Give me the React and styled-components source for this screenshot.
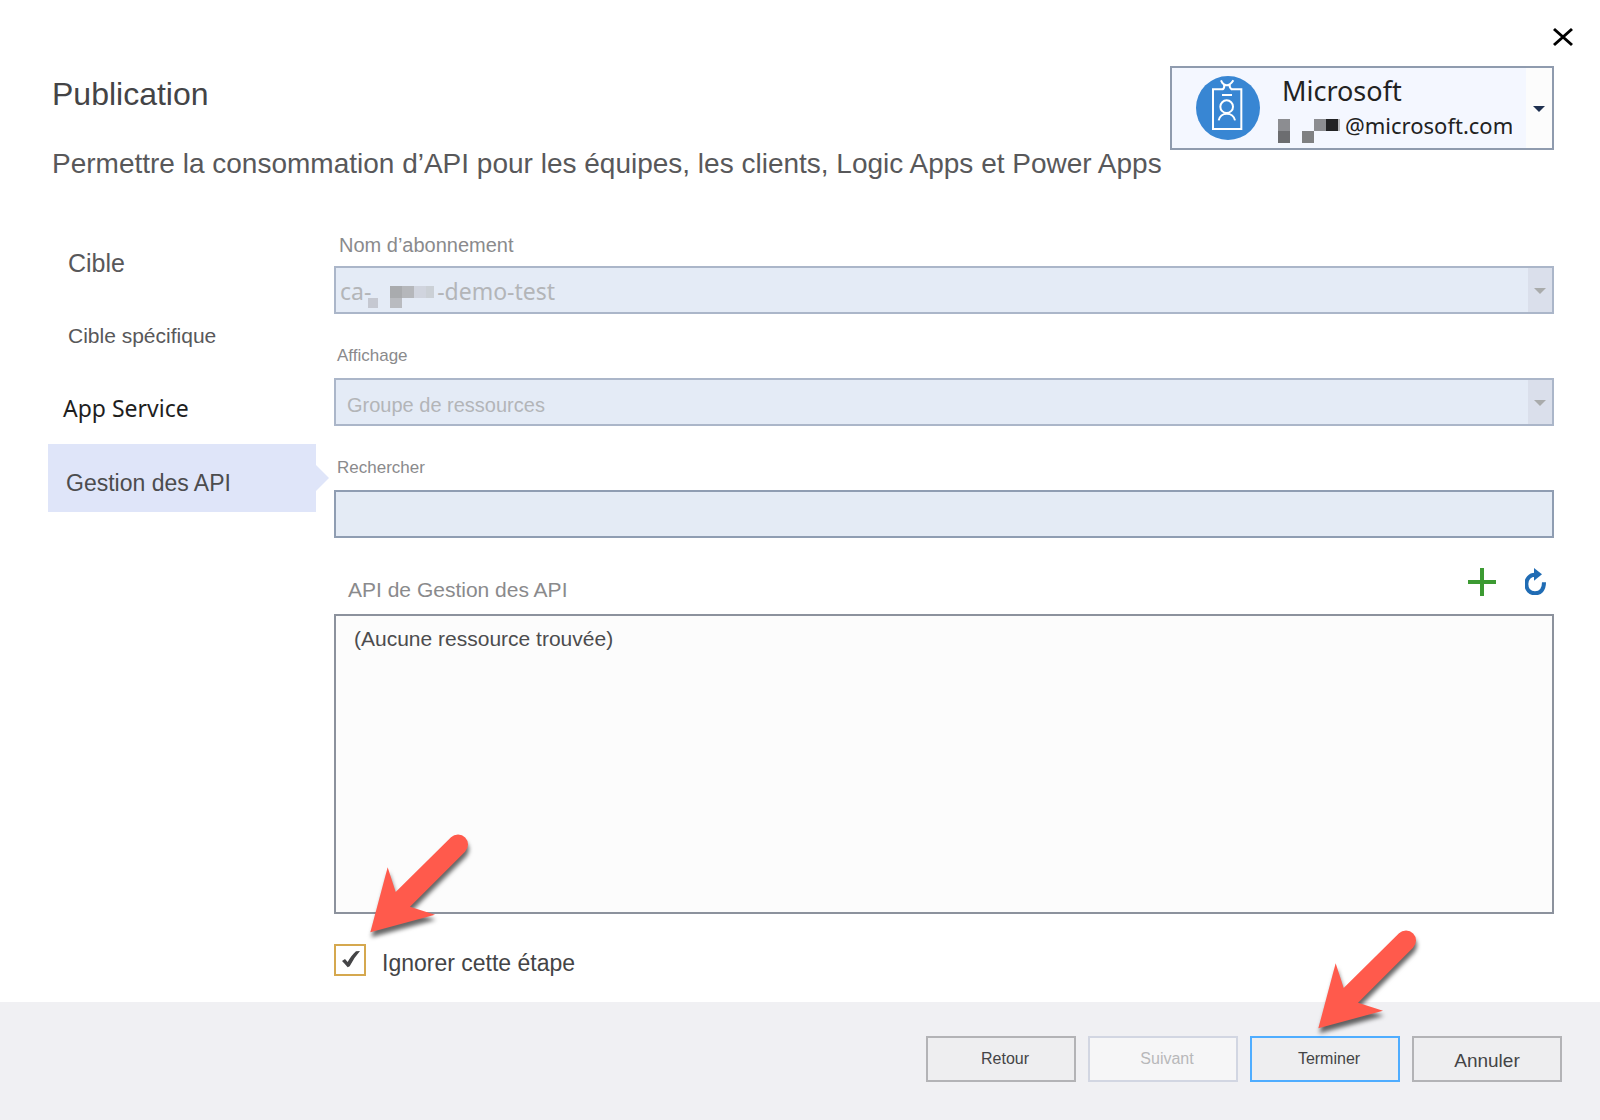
import React from "react"
import styled, { createGlobalStyle, css } from "styled-components"

const GlobalStyle = createGlobalStyle`
  *,
  *::before,
  *::after {
    box-sizing: border-box;
  }

  body {
    margin: 0;
    background: #fff;
    font-family: "Liberation Sans", Arial, sans-serif;
    color: #4c4c4e;
  }

  button,
  input,
  select {
    font-family: inherit;
    margin: 0;
  }
`

const segoe = css`
  font-family: "Noto Sans", "Open Sans", sans-serif;
`

const Dialog = styled.div`
  min-height: 100vh;
  display: flex;
  flex-direction: column;
`

const TitleBar = styled.div`
  height: 66px;
  padding: 26px 25px 0 0;
  display: flex;
  justify-content: flex-end;
  align-items: flex-start;
`

const CloseButton = styled.button`
  border: 0;
  padding: 0;
  background: transparent;
  cursor: pointer;

  svg {
    display: block;
  }
`

const Header = styled.header`
  display: flex;
  align-items: flex-start;
  padding: 0 46px 46px 52px;
`

const Titles = styled.div`
  flex: 1;
  min-width: 0;
  padding-top: 6px;
`

const Title = styled.h1`
  margin: 0 0 30px;
  font-size: 32px;
  font-weight: 400;
  line-height: 44px;
  color: #444446;
`

const Subtitle = styled.p`
  margin: 0;
  font-size: 28px;
  line-height: 36px;
  white-space: nowrap;
  color: #58585a;
`

const AccountButton = styled.button`
  flex: 0 0 384px;
  height: 84px;
  padding: 0;
  display: flex;
  align-items: stretch;
  border: 2px solid #8f9bae;
  background: #f4f7ff;
  color: #222;
  text-align: left;
  cursor: pointer;
`

const AccountInfo = styled.span`
  flex: 1;
  display: flex;
  align-items: center;
  gap: 18px;
  padding-left: 24px;
`

const AccountText = styled.span`
  ${segoe}
  display: block;
  line-height: 35px;
`

const AccountName = styled.span`
  display: block;
  padding-left: 4px;
  font-size: 27px;
`

const AccountMail = styled.span`
  display: flex;
  align-items: center;
  gap: 5px;
  font-size: 22px;

  svg {
    margin-top: 10px;
  }
`

const MailDomain = styled.span`
  width: 167px;
  overflow: hidden;
  white-space: nowrap;
`

const Chevron = styled.span`
  display: flex;
  align-items: center;
  justify-content: center;
  width: ${props => (props.$disabled ? 24 : 26)}px;
  padding-top: 2px;
  background: ${props => (props.$disabled ? "#dadfeb" : "#fcfcfc")};

  &::after {
    content: "";
    border: 6px solid transparent;
    border-top-color: ${props => (props.$disabled ? "#a9abab" : "#1f3050")};
    border-bottom: 0;
  }
`

const Body = styled.div`
  flex: 1;
  display: grid;
  grid-template-columns: 268px 1fr;
  gap: 18px;
  padding: 0 46px 26px 48px;
`

const Steps = styled.nav`
  display: flex;
  flex-direction: column;
  gap: 4px;
`

const Step = styled.a`
  position: relative;
  display: flex;
  align-items: center;
  height: 68px;
  padding: 3px 0 0 20px;
  font-size: ${props => props.$size}px;
  color: #58585a;
  text-decoration: none;

  ${props =>
    props.$latin &&
    css`
      ${segoe}
      padding-left: 15px;
      color: #1e1e1e;
    `}

  ${props =>
    props.$active &&
    css`
      padding: 10px 0 0 18px;
      background: #dfe5f9;
      color: #4c4c4e;

      &::after {
        content: "";
        position: absolute;
        left: 100%;
        top: 21px;
        border: 13px solid transparent;
        border-left-color: #dfe5f9;
        border-right: 0;
      }
    `}
`

const Form = styled.form`
  display: flex;
  flex-direction: column;
`

const Field = styled.div`
  margin-bottom: 26px;
`

const Label = styled.label`
  display: block;
  height: 38px;
  padding-left: ${props => (props.$small ? 3 : 5)}px;
  font-size: ${props => (props.$small ? 17 : 20)}px;
  line-height: ${props => (props.$small ? 31 : 34)}px;
  color: #8a8a8c;
`

const SelectBox = styled.div`
  position: relative;
  display: flex;
  height: 48px;
  border: 2px solid #abb6c9;
  background: #e4ebf6;
`

const Select = styled.select`
  flex: 1;
  min-width: 0;
  appearance: none;
  border: 0;
  padding: ${props => (props.$latin ? "2px 0 0 4px" : "6px 0 0 11px")};
  background: transparent;
  font-size: 20px;
  color: #b3b5b8;
  opacity: 1;

  ${props =>
    props.$latin &&
    css`
      ${segoe}
      font-size: 23px;
    `}
`

/* covers the hidden part of the subscription name */
const NameMask = styled.svg`
  position: absolute;
  left: 32px;
  top: 18px;
`

const SearchInput = styled.input`
  display: block;
  width: 100%;
  height: 48px;
  padding: 0 10px;
  border: 2px solid #8f9db2;
  border-radius: 0;
  background: #e4ebf5;
  font-size: 20px;
`

const ListHeader = styled.div`
  display: flex;
  justify-content: space-between;
  height: 50px;
  padding: 0 8px 0 14px;
`

const ListTitle = styled.h2`
  margin: 0;
  font-size: 21px;
  font-weight: 400;
  line-height: 52px;
  color: #8a8a8c;
`

const ListActions = styled.div`
  display: flex;
  align-items: flex-start;
  gap: 29px;
  padding-top: 4px;
`

const IconButton = styled(CloseButton)``

const ResourceList = styled.div`
  flex: 1;
  min-height: 200px;
  padding: 6px 18px;
  border: 2px solid #8c929d;
  background: #fcfcfc;
  font-size: 21px;
  line-height: 34px;
  color: #4c4c4e;
`

const SkipRow = styled.div`
  position: relative;
  display: flex;
  align-items: center;
  gap: 16px;
  margin-top: 30px;
`

const CheckBox = styled.input`
  appearance: none;
  width: 32px;
  height: 32px;
  margin: 0;
  border: 2px solid #d5a84f;
  background: #fff;
`

const CheckMark = styled.svg`
  position: absolute;
  left: 8px;
  top: 7px;
  pointer-events: none;
`

const SkipLabel = styled.label`
  padding-top: 6px;
  font-size: 23px;
  line-height: 26px;
  color: #444446;
`

const Footer = styled.footer`
  display: flex;
  justify-content: flex-end;
  gap: 12px;
  padding: 34px 38px 38px;
  background: #f0f0f3;
`

const ButtonSlot = styled.div`
  position: relative;
`

const borders = {
  normal: "#b3b3b6",
  disabled: "#d2d6e2",
  primary: "#4fadff",
}

const Button = styled.button`
  display: block;
  width: 150px;
  height: 46px;
  padding: ${props => (props.$large ? "4px 0 0" : "0 0 0 8px")};
  border: 2px solid ${props => borders[props.$kind || "normal"]};
  background: ${props => (props.disabled ? "#f6f6f7" : "#eeeef0")};
  font-size: ${props => (props.$large ? 19 : 16)}px;
  color: ${props => (props.disabled ? "#b8b8ba" : "#444446")};
`

const Pointer = styled.svg`
  position: absolute;
  left: ${props => props.$left}px;
  top: ${props => props.$top}px;
  z-index: 1;
  overflow: visible;
  pointer-events: none;
  filter: drop-shadow(1px 5px 2px rgba(0, 0, 0, 0.6));
`

const Arrow = ({ left, top }) => (
  <Pointer $left={left} $top={top} width="110" height="110" viewBox="0 0 330 330" aria-hidden="true">
    <path
      d="M10 304 L62 109 L86 183 L252 19 A30 30 0 0 1 294 62 L129 227 L204 251 Z"
      fill="#ff5a4c"
    />
  </Pointer>
)

const BadgeIcon = () => (
  <svg width="64" height="64" viewBox="0 0 192 192" fill="none" aria-hidden="true">
    <circle cx="96" cy="96" r="96" fill="#3886d3" />
    <g stroke="#fff" strokeWidth="6">
      <path d="M81 40 H51 V159 H136 V40 H107" />
      <path d="M75 13 Q79 23 84 25 Q93 31 101 25 Q107 22 112 13" />
      <path d="M84 25 Q87 34 80 41 M101 25 Q99 34 108 41" />
      <path d="M78 57 H108" />
      <circle cx="92" cy="92" r="19" />
      <path d="M68 133 A25 25 0 0 1 117 133" />
    </g>
  </svg>
)

const MailMask = () => (
  <svg width="62" height="24" viewBox="0 0 62 24" aria-hidden="true">
    <path d="M0 0h12v12H0z M36 0h12v12H36z" fill="#8c8d91" />
    <path d="M0 12h12v12H0z" fill="#6c6d70" />
    <path d="M24 12h12v12H24z" fill="#7f8082" />
    <path d="M48 0h12v12H48z" fill="#222224" />
    <path d="M60 0h2v12h-2z" fill="#b5b6ba" />
  </svg>
)

const App = () => {
  const [skip, setSkip] = React.useState(true)

  return (
    <Dialog>
      <GlobalStyle />
      <TitleBar>
        <CloseButton type="button" aria-label="Fermer">
          <svg width="24" height="22" viewBox="0 0 24 22">
            <path d="M3 3 L21 19 M21 3 L3 19" stroke="#000" strokeWidth="3" />
          </svg>
        </CloseButton>
      </TitleBar>

      <Header>
        <Titles>
          <Title>Publication</Title>
          <Subtitle>
            Permettre la consommation d’API pour les équipes, les clients, Logic Apps et Power Apps
          </Subtitle>
        </Titles>
        <AccountButton type="button" aria-haspopup="listbox">
          <AccountInfo>
            <BadgeIcon />
            <AccountText>
              <AccountName>Microsoft</AccountName>
              <AccountMail>
                <MailMask />
                <MailDomain>@microsoft.com</MailDomain>
              </AccountMail>
            </AccountText>
          </AccountInfo>
          <Chevron />
        </AccountButton>
      </Header>

      <Body>
        <Steps>
          <Step href="#cible" $size={25}>Cible</Step>
          <Step href="#cible-specifique" $size={21}>Cible spécifique</Step>
          <Step href="#app-service" $size={23} $latin>App Service</Step>
          <Step href="#gestion-api" $size={23} $active aria-current="step">Gestion des API</Step>
        </Steps>

        <Form>
          <Field>
            <Label htmlFor="subscription">Nom d’abonnement</Label>
            <SelectBox>
              <Select id="subscription" $latin disabled>
                <option>{"ca-" + "\u00a0".repeat(11) + "-demo-test"}</option>
              </Select>
              <Chevron $disabled />
              <NameMask width="66" height="22" viewBox="0 0 66 22" aria-hidden="true">
                <path d="M0 12h10v10H0z" fill="#c5c8d1" />
                <path d="M22 0h12v12H22z" fill="#a9abae" />
                <path d="M34 0h12v12H34z" fill="#b5b7bb" />
                <path d="M46 0h12v12H46z" fill="#d0d4de" />
                <path d="M58 0h8v12H58z" fill="#cbd0d6" />
                <path d="M22 12h12v10H22z" fill="#b9bbc0" />
              </NameMask>
            </SelectBox>
          </Field>

          <Field>
            <Label htmlFor="view" $small>Affichage</Label>
            <SelectBox>
              <Select id="view" disabled>
                <option>Groupe de ressources</option>
              </Select>
              <Chevron $disabled />
            </SelectBox>
          </Field>

          <Field>
            <Label htmlFor="search" $small>Rechercher</Label>
            <SearchInput id="search" type="text" />
          </Field>

          <ListHeader>
            <ListTitle>API de Gestion des API</ListTitle>
            <ListActions>
              <IconButton type="button" aria-label="Ajouter">
                <svg width="28" height="28" viewBox="0 0 28 28">
                  <path d="M14 0 V28 M0 14 H28" stroke="#3c9a32" strokeWidth="4" />
                </svg>
              </IconButton>
              <IconButton type="button" aria-label="Actualiser">
                <svg width="21" height="27" viewBox="0 0 63 81">
                  <path
                    d="M30 20 C14 20 4 33 4 48 C4 65 15 76 30 76 C46 76 57 65 57 43"
                    fill="none"
                    stroke="#206cb4"
                    strokeWidth="12"
                  />
                  <path d="M27 0 L51 19 L27 38 Z" fill="#206cb4" />
                </svg>
              </IconButton>
            </ListActions>
          </ListHeader>
          <ResourceList>(Aucune ressource trouvée)</ResourceList>

          <SkipRow>
            <CheckBox
              id="skip"
              type="checkbox"
              checked={skip}
              onChange={e => setSkip(e.target.checked)}
            />
            {skip && (
              <CheckMark width="18" height="17" viewBox="0 0 54 51" aria-hidden="true">
                <path d="M0 30 L9 24 L17 33 Q30 11 42 1 L54 0 Q36 20 23 46 L17 49 Q10 40 0 30 Z" fill="#444446" />
              </CheckMark>
            )}
            <SkipLabel htmlFor="skip">Ignorer cette étape</SkipLabel>
            <Arrow left={33} top={-113} />
          </SkipRow>
        </Form>
      </Body>

      <Footer>
        <Button type="button">Retour</Button>
        <Button type="button" $kind="disabled" disabled>Suivant</Button>
        <ButtonSlot>
          <Button type="button" $kind="primary">Terminer</Button>
          <Arrow left={65} top={-109} />
        </ButtonSlot>
        <Button type="button" $large>Annuler</Button>
      </Footer>
    </Dialog>
  )
}

export default App
